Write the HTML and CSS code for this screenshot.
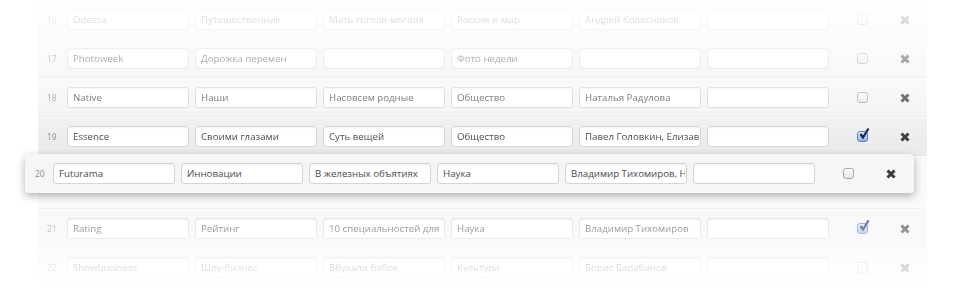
FILE: index.html
```html
<!DOCTYPE html>
<html lang="ru">
<head>
<meta charset="UTF-8">
<title>Рубрики</title>
<link rel="stylesheet" href="styles.css">
</head>
<body>
<div class="page">
    <div class="table">
        <div class="row">
            <span class="num">16</span>
            <input class="field" type="text" value="Odessa">
            <input class="field" type="text" value="Путешественник">
            <input class="field" type="text" value="Мать гоголя-моголя">
            <input class="field" type="text" value="Россия и мир">
            <input class="field" type="text" value="Андрей Колесников">
            <input class="field" type="text" value="">
            <span class="check"></span>
            <span class="remove"><svg viewBox="0 0 10 10"><path d="M1.5 1.5L8.5 8.5M8.5 1.5L1.5 8.5"/></svg></span>
        </div>
        <div class="row">
            <span class="num">17</span>
            <input class="field" type="text" value="Photoweek">
            <input class="field" type="text" value="Дорожка перемен">
            <input class="field" type="text" value="">
            <input class="field" type="text" value="Фото недели">
            <input class="field" type="text" value="">
            <input class="field" type="text" value="">
            <span class="check"></span>
            <span class="remove"><svg viewBox="0 0 10 10"><path d="M1.5 1.5L8.5 8.5M8.5 1.5L1.5 8.5"/></svg></span>
        </div>
        <div class="row">
            <span class="num">18</span>
            <input class="field" type="text" value="Native">
            <input class="field" type="text" value="Наши">
            <input class="field" type="text" value="Насовсем родные">
            <input class="field" type="text" value="Общество">
            <input class="field" type="text" value="Наталья Радулова">
            <input class="field" type="text" value="">
            <span class="check"></span>
            <span class="remove"><svg viewBox="0 0 10 10"><path d="M1.5 1.5L8.5 8.5M8.5 1.5L1.5 8.5"/></svg></span>
        </div>
        <div class="row hover">
            <span class="num">19</span>
            <input class="field" type="text" value="Essence">
            <input class="field" type="text" value="Своими глазами">
            <input class="field" type="text" value="Суть вещей">
            <input class="field" type="text" value="Общество">
            <input class="field" type="text" value="Павел Головкин, Елизавета Бирюкова">
            <input class="field" type="text" value="">
            <span class="check checked"><svg viewBox="0 0 12 12"><path d="M2.5 6L5 9.5L10.5 0.5"/></svg></span>
            <span class="remove"><svg viewBox="0 0 10 10"><path d="M1.5 1.5L8.5 8.5M8.5 1.5L1.5 8.5"/></svg></span>
        </div>
        <div class="placeholder"></div>
        <div class="row">
            <span class="num">21</span>
            <input class="field" type="text" value="Rating">
            <input class="field" type="text" value="Рейтинг">
            <input class="field" type="text" value="10 специальностей для">
            <input class="field" type="text" value="Наука">
            <input class="field" type="text" value="Владимир Тихомиров">
            <input class="field" type="text" value="">
            <span class="check checked"><svg viewBox="0 0 12 12"><path d="M2.5 6L5 9.5L10.5 0.5"/></svg></span>
            <span class="remove"><svg viewBox="0 0 10 10"><path d="M1.5 1.5L8.5 8.5M8.5 1.5L1.5 8.5"/></svg></span>
        </div>
        <div class="row">
            <span class="num">22</span>
            <input class="field" type="text" value="Showbusiness">
            <input class="field" type="text" value="Шоу-бизнес">
            <input class="field" type="text" value="Вбухали бабок">
            <input class="field" type="text" value="Культура">
            <input class="field" type="text" value="Борис Барабанов">
            <input class="field" type="text" value="">
            <span class="check"></span>
            <span class="remove"><svg viewBox="0 0 10 10"><path d="M1.5 1.5L8.5 8.5M8.5 1.5L1.5 8.5"/></svg></span>
        </div>
    </div>

    <div class="row dragging">
        <span class="num">20</span>
        <input class="field" type="text" value="Futurama">
        <input class="field" type="text" value="Инновации">
        <input class="field" type="text" value="В железных объятиях">
        <input class="field" type="text" value="Наука">
        <input class="field" type="text" value="Владимир Тихомиров, Наталья Радулова">
        <input class="field" type="text" value="">
        <span class="check"></span>
        <span class="remove"><svg viewBox="0 0 10 10"><path d="M1.5 1.5L8.5 8.5M8.5 1.5L1.5 8.5"/></svg></span>
    </div>
</div>
</body>
</html>
```

FILE: styles.css
```css
* { margin: 0; padding: 0; box-sizing: border-box; }
body {
    background: #fff;
    font-family: "Open Sans", "Noto Sans", sans-serif;
    overflow: hidden;
}
.page {
    position: relative;
    padding-left: 38px;
    height: 288px;
}
.table {
    width: 889px;
    background: #f4f4f4;
    box-shadow: 0 0 5px rgba(0, 0, 0, 0.07);
    -webkit-mask-image: linear-gradient(to bottom, rgba(0,0,0,0.05) 0, #000 140px, #000 182px, transparent 288px);
    mask-image: linear-gradient(to bottom, rgba(0,0,0,0.05) 0, #000 140px, #000 182px, transparent 288px);
}
.row {
    display: flex;
    align-items: center;
    height: 39px;
    border-top: 1px solid #fbfbfb;
    border-bottom: 1px solid #e6e6e6;
    background: linear-gradient(#f6f6f6, #f1f1f1);
}
.row.hover { background: linear-gradient(#efefef, #ebebeb); }
.placeholder {
    height: 53px;
    background: #f9f9f9;
    border-top: 1px solid #fff;
    border-bottom: 1px solid #ececec;
}
.num {
    width: 29px;
    padding-left: 9px;
    font-size: 8.5px;
    color: #8c8c8c;
}
.field {
    width: 122px;
    height: 21px;
    margin-right: 6px;
    padding: 0 1px 0 5px;
    border: 1px solid #d4d4d4;
    border-radius: 3px;
    background: #fff;
    box-shadow: inset 0 1px 2px rgba(0, 0, 0, 0.05);
    font-family: "Open Sans", "Noto Sans", sans-serif;
    font-size: 9.7px;
    color: #4a4a4a;
    outline: none;
}
.check {
    position: relative;
    width: 11px;
    height: 11px;
    margin-left: 22px;
    border: 1px solid #a8a8a8;
    border-radius: 3px;
    background: linear-gradient(#fff, #e4e4e4);
}
.check.checked {
    border-color: #5d82bd;
    background: linear-gradient(#d6e6fb, #8fb5ea);
}
.check svg {
    position: absolute;
    left: 0;
    top: -4px;
    width: 12px;
    height: 12px;
    fill: none;
    stroke: #102050;
    stroke-width: 2.2;
}
.remove {
    width: 10px;
    height: 10px;
    margin-left: 32px;
}
.remove svg {
    display: block;
    width: 10px;
    height: 10px;
    fill: none;
    stroke: #3a3a3a;
    stroke-width: 3;
}
.dragging {
    position: absolute;
    left: 25px;
    top: 154px;
    width: 889px;
    height: 39px;
    border: none;
    border-radius: 3px;
    background: #f6f6f6;
    box-shadow: 0 3px 9px rgba(0, 0, 0, 0.3);
}
.dragging .num { width: 28px; padding-left: 10px; }
```
